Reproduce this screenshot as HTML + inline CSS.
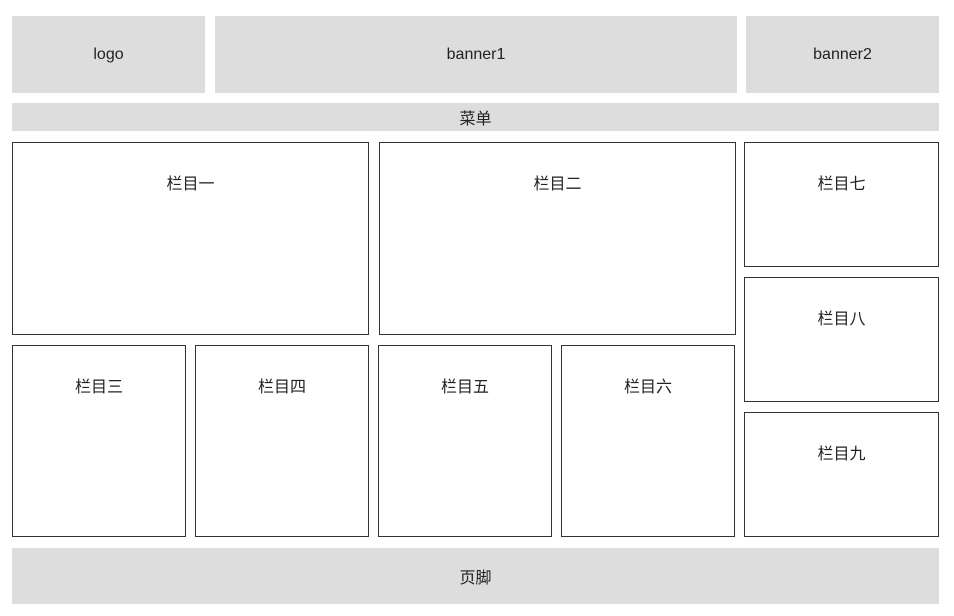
<!DOCTYPE html>
<html><head><meta charset="utf-8"><style>
body{margin:0;width:954px;height:616px;background:#fff;position:relative;font-family:"Liberation Sans","Noto Sans CJK SC",sans-serif;font-size:16px;color:#222}
.g{position:absolute;background:#ddd;display:flex;align-items:center;justify-content:center}
.b{position:absolute;box-sizing:border-box;border:1px solid #333;text-align:center;padding-top:27px}
</style></head><body>
<div class="g" style="left:12px;top:16px;width:193px;height:77px">logo</div>
<div class="g" style="left:215px;top:16px;width:522px;height:77px">banner1</div>
<div class="g" style="left:746px;top:16px;width:193px;height:77px">banner2</div>
<div class="g" style="left:12px;top:103px;width:927px;height:28px">菜单</div>
<div class="b" style="left:12px;top:142px;width:357px;height:193px">栏目一</div>
<div class="b" style="left:379px;top:142px;width:357px;height:193px">栏目二</div>
<div class="b" style="left:744px;top:142px;width:195px;height:125px">栏目七</div>
<div class="b" style="left:744px;top:277px;width:195px;height:125px">栏目八</div>
<div class="b" style="left:744px;top:412px;width:195px;height:125px">栏目九</div>
<div class="b" style="left:12px;top:345px;width:174px;height:192px">栏目三</div>
<div class="b" style="left:195px;top:345px;width:174px;height:192px">栏目四</div>
<div class="b" style="left:378px;top:345px;width:174px;height:192px">栏目五</div>
<div class="b" style="left:561px;top:345px;width:174px;height:192px">栏目六</div>
<div class="g" style="left:12px;top:548px;width:927px;height:56px">页脚</div>
</body></html>
